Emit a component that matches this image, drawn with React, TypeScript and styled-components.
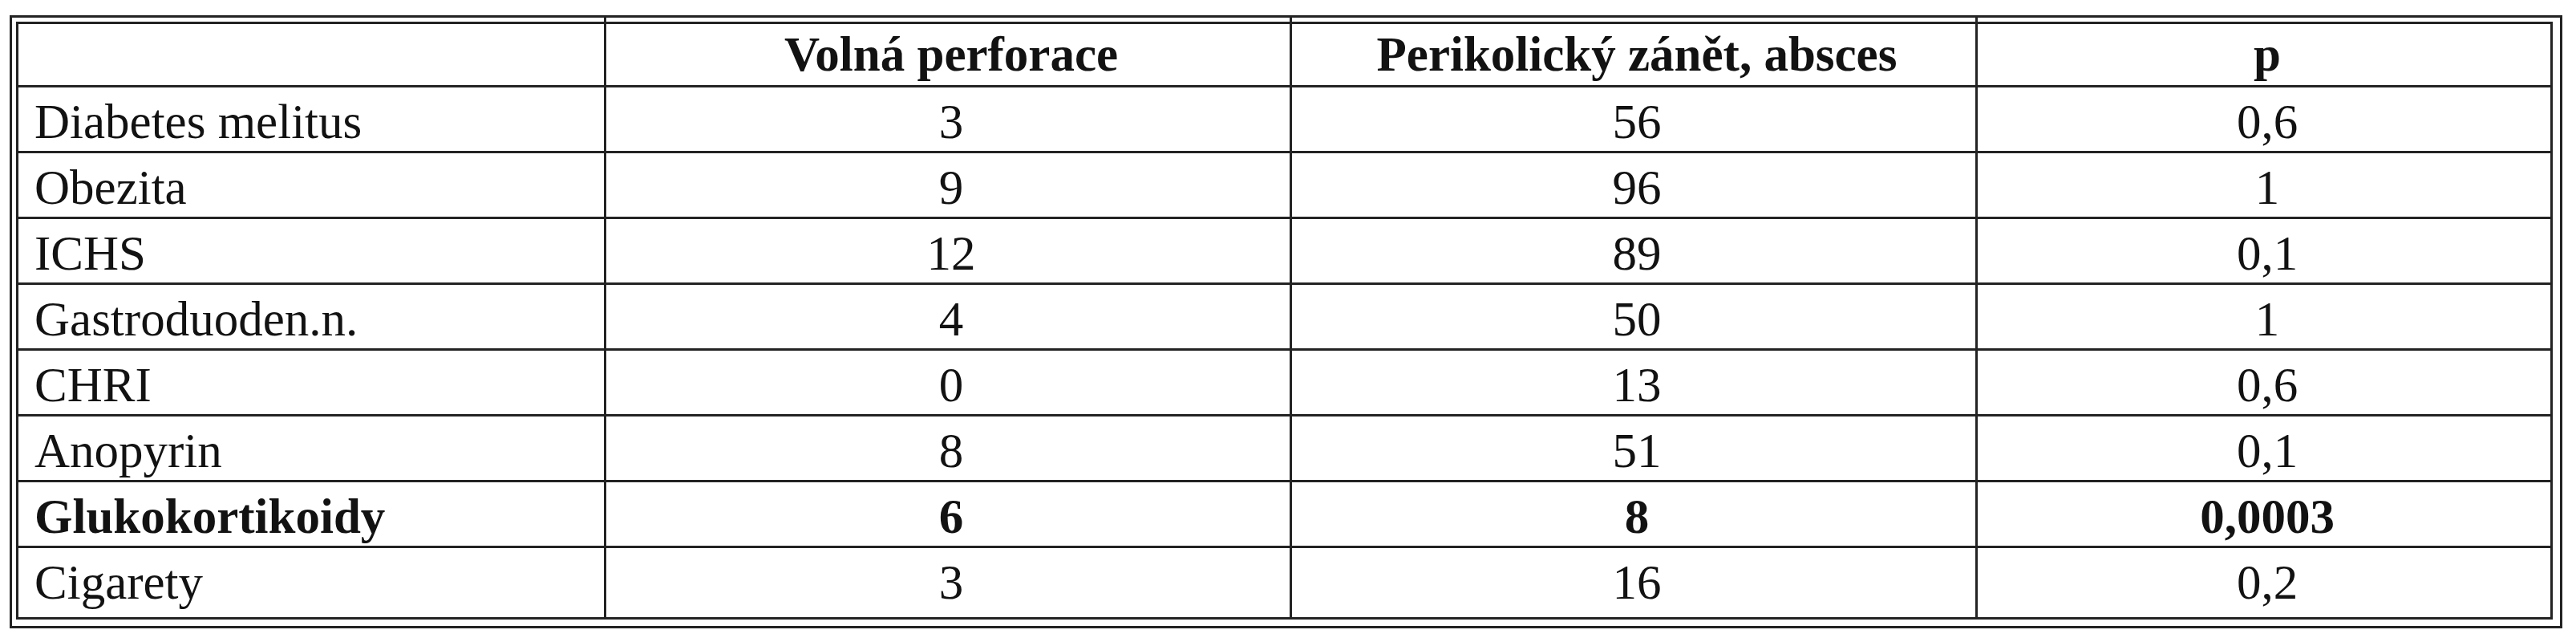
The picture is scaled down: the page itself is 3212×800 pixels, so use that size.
import { FC } from 'react';
import styled, { createGlobalStyle } from 'styled-components';

type RowKind = 'head' | 'body' | 'last';

interface Row {
  label: string;
  free: string;
  abscess: string;
  p: string;
  bold?: boolean;
}

const rows: Row[] = [
  { label: 'Diabetes melitus', free: '3', abscess: '56', p: '0,6' },
  { label: 'Obezita', free: '9', abscess: '96', p: '1' },
  { label: 'ICHS', free: '12', abscess: '89', p: '0,1' },
  { label: 'Gastroduoden.n.', free: '4', abscess: '50', p: '1' },
  { label: 'CHRI', free: '0', abscess: '13', p: '0,6' },
  { label: 'Anopyrin', free: '8', abscess: '51', p: '0,1' },
  { label: 'Glukokortikoidy', free: '6', abscess: '8', p: '0,0003', bold: true },
  { label: 'Cigarety', free: '3', abscess: '16', p: '0,2' },
];

const LINE = '#232323';

const GlobalStyle = createGlobalStyle`
  html, body {
    margin: 0;
    padding: 0;
    background: #ffffff;
  }
  body {
    font-family: "Liberation Serif", "Times New Roman", serif;
    color: #121212;
  }
`;

const Frame = styled.div`
  box-sizing: border-box;
  width: 3183px;
  margin: 19px 0 0 12px;
  border: 3px solid ${LINE};
  padding: 5px 9px 8px 5px;
`;

const Table = styled.table`
  width: 3163px;
  border-collapse: separate;
  border-spacing: 0;
  table-layout: fixed;
  border: 3px solid ${LINE};
`;

const heights: Record<RowKind, number> = { head: 76, body: 82, last: 89 };

const Cell = styled.td<{ $kind: RowKind; $first?: boolean; $bold?: boolean; $w?: number }>`
  box-sizing: border-box;
  height: ${({ $kind }) => heights[$kind]}px;
  ${({ $w }) => ($w ? `width: ${$w}px;` : '')}
  padding-top: ${({ $kind }) => ($kind === 'body' ? 7 : 0)}px;
  padding-left: ${({ $first }) => ($first ? 20 : 8)}px;
  padding-right: 0;
  padding-bottom: 0;
  border-top: ${({ $kind }) => ($kind === 'head' ? 'none' : `3px solid ${LINE}`)};
  border-left: ${({ $first }) => ($first ? 'none' : `3px solid ${LINE}`)};
  text-align: ${({ $first }) => ($first ? 'left' : 'center')};
  vertical-align: middle;
  font-size: 61px;
  line-height: 1.1;
  font-weight: ${({ $bold }) => ($bold ? 700 : 400)};
  white-space: nowrap;
`;

const HeadCell = styled(Cell).attrs({ as: 'th' })`
  position: relative;
  font-weight: 700;

  /* column rules run up through the gap to the outer frame */
  ${({ $first }) =>
    $first
      ? ''
      : `
  &::before {
    content: '';
    position: absolute;
    left: -3px;
    top: -8px;
    width: 3px;
    height: 8px;
    background: ${LINE};
  }`}
`;

const DataRow: FC<{ row: Row; last: boolean }> = ({ row, last }) => {
  const kind: RowKind = last ? 'last' : 'body';
  return (
    <tr>
      <Cell $kind={kind} $first $bold={row.bold}>
        {row.label}
      </Cell>
      <Cell $kind={kind} $bold={row.bold}>
        {row.free}
      </Cell>
      <Cell $kind={kind} $bold={row.bold}>
        {row.abscess}
      </Cell>
      <Cell $kind={kind} $bold={row.bold}>
        {row.p}
      </Cell>
    </tr>
  );
};

const App: FC = () => (
  <>
    <GlobalStyle />
    <Frame>
      <Table>
        <thead>
          <tr>
            <HeadCell $kind="head" $first $w={730} />
            <HeadCell $kind="head" $w={855}>
              Volná perforace
            </HeadCell>
            <HeadCell $kind="head" $w={855}>
              Perikolický zánět, absces
            </HeadCell>
            <HeadCell $kind="head" $w={717}>
              p
            </HeadCell>
          </tr>
        </thead>
        <tbody>
          {rows.map((row, i) => (
            <DataRow key={row.label} row={row} last={i === rows.length - 1} />
          ))}
        </tbody>
      </Table>
    </Frame>
  </>
);

export default App;
